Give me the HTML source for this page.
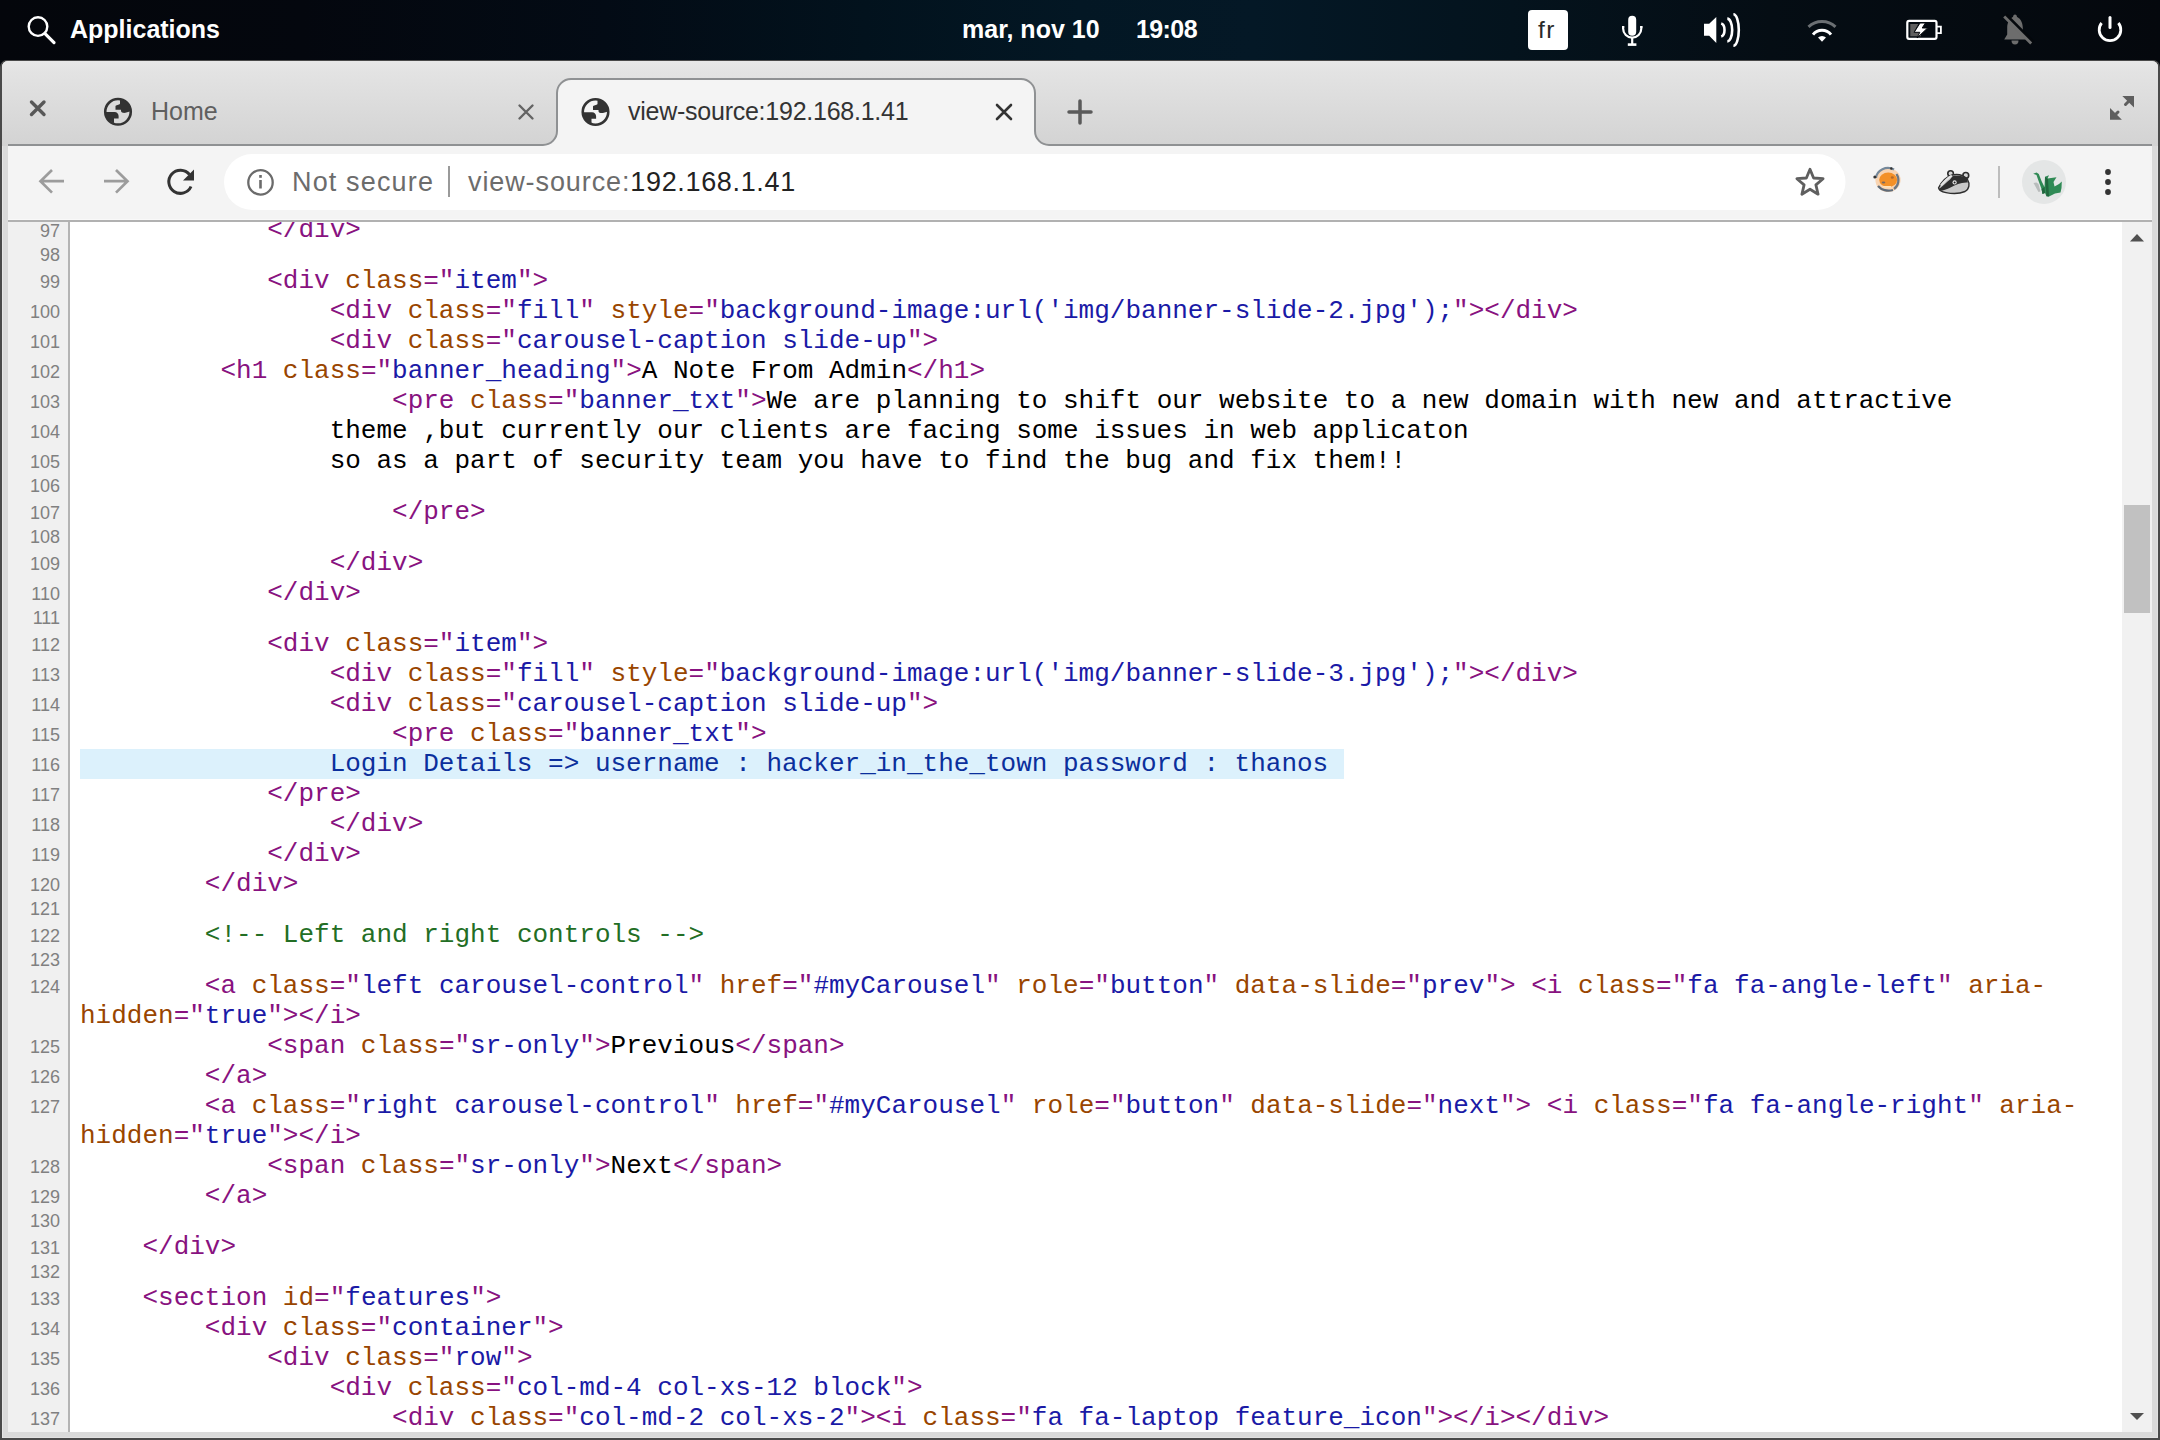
<!DOCTYPE html>
<html><head><meta charset="utf-8">
<style>
*{box-sizing:border-box}
html,body{margin:0;padding:0;width:2160px;height:1440px;overflow:hidden;background:#05080d;font-family:"Liberation Sans",sans-serif}
svg{position:absolute;overflow:visible}
#panel{position:absolute;left:0;top:0;width:2160px;height:60px;background:linear-gradient(90deg,#04060b 0%,#04070e 14%,#030b15 28%,#02121d 40%,#031724 50%,#041826 58%,#04131d 70%,#050d14 82%,#05080d 100%)}
.pt{position:absolute;color:#fff;font-weight:bold;font-size:25px;top:14px;line-height:30px;white-space:pre}
#win{position:absolute;left:0;top:60px;width:2160px;height:1380px;background:#4a4a4a;border-radius:7px 7px 0 0}
#frame{position:absolute;left:2px;top:1px;width:2156px;height:1377px;background:#dadada;border-radius:6px 6px 0 0;box-shadow:inset 1px 0 0 #e6e6e6,inset -1px -1px 0 #e2e2e2}
#tabstrip{position:absolute;left:2px;top:1px;width:2156px;height:85px;background:linear-gradient(#e8e8e8 0px,#e3e3e3 10px,#d3d3d3 85px);border-radius:6px 6px 0 0}
#toolbar{position:absolute;left:8px;top:86px;width:2144px;height:74px;background:#f4f4f4}
#tbline{position:absolute;left:8px;top:159px;width:2144px;height:3px;background:linear-gradient(#f9f9f9 0,#f9f9f9 1px,#b1b1b1 1px)}
#content{position:absolute;left:8px;top:162px;width:2144px;height:1210px;background:#fff;overflow:hidden}
#gutterbg{position:absolute;left:0;top:0;width:62px;height:1210px;background:#f0f0f0;border-right:2px solid #b4b4b4}
#code{position:absolute;left:0;top:-7px;border-collapse:collapse;border-spacing:0}
#code td{padding:0;vertical-align:baseline}
#code td.ln{width:62px;font-family:"Liberation Sans",sans-serif;font-size:18px;color:#808080;text-align:right;padding-right:10px;white-space:nowrap}
#code td.lc{font-family:"Liberation Mono",monospace;font-size:26px;color:#000;padding-left:10px;white-space:pre}
.t{color:#881280}.n{color:#994500}.v{color:#1a1aa6}.c{color:#236e25}
.hl{background:#dcf1fc;color:#0b2f9c}
.hl span{color:#0b2f9c}
#sbar{position:absolute;left:2114px;top:0;width:30px;height:1210px;background:#f1f1f1}
.ui{position:absolute;white-space:pre;font-family:"Liberation Sans",sans-serif}
</style></head><body>
<div id="panel">
  <svg width="60" height="60" style="left:0;top:0">
    <circle cx="38" cy="26.6" r="9.3" fill="none" stroke="#fff" stroke-width="2.4"/>
    <line x1="45" y1="33.6" x2="54" y2="42.6" stroke="#fff" stroke-width="3.2" stroke-linecap="round"/>
  </svg>
  <div class="pt" style="left:70px">Applications</div>
  <div class="pt" style="left:962px">mar, nov 10</div>
  <div class="pt" style="left:1136px;letter-spacing:-0.6px">19:08</div>
  <!-- fr -->
  <div style="position:absolute;left:1528px;top:10px;width:40px;height:40px;background:#fff;border-radius:4px"></div>
  <div class="ui" style="left:1538px;top:14.5px;font-size:24.5px;line-height:30px;color:#2a2a2a;letter-spacing:1.5px">fr</div>
  <!-- mic -->
  <svg width="40" height="60" style="left:1612px;top:0">
    <rect x="16.2" y="15.8" width="8" height="20" rx="4" fill="#fff"/>
    <path d="M11.1 26 V28.5 A9.1 9.1 0 0 0 29.3 28.5 V26" fill="none" stroke="#fff" stroke-width="2.2"/>
    <path d="M10 27 H12.2 M28.2 27 H30.4" stroke="#fff" stroke-width="2"/>
    <line x1="20.2" y1="37" x2="20.2" y2="44" stroke="#fff" stroke-width="2.2"/>
    <rect x="15.8" y="43.3" width="8.6" height="2.6" fill="#fff"/>
  </svg>
  <!-- volume -->
  <svg width="50" height="60" style="left:1700px;top:0">
    <path d="M4 23.7 H9.2 L16.3 17 V43 L9.2 35.7 H4 Z" fill="#fff"/>
    <path d="M21.2 23.5 A4 6.6 0 0 1 21.2 36.5" fill="none" stroke="#fff" stroke-width="2.6"/>
    <path d="M27.3 18.6 A4.8 11.2 0 0 1 27.3 41.4" fill="none" stroke="#fff" stroke-width="2.6"/>
    <path d="M33.4 14.2 A5.4 15.8 0 0 1 33.4 45.8" fill="none" stroke="#fff" stroke-width="2.6"/>
  </svg>
  <!-- wifi -->
  <svg width="50" height="60" style="left:1797px;top:0">
    <path d="M11.5 26.9 A19.5 19.5 0 0 1 38.5 26.9" fill="none" stroke="#6b6f73" stroke-width="3"/>
    <path d="M16 34.6 A11.5 11.5 0 0 1 34 34.6" fill="none" stroke="#fff" stroke-width="3"/>
    <path d="M21 37.6 L25 41.8 L29 37.6 A5.8 5.8 0 0 0 21 37.6 Z" fill="#fff"/>
  </svg>
  <!-- battery -->
  <svg width="50" height="60" style="left:1900px;top:0">
    <rect x="7.3" y="20.9" width="29.2" height="18" rx="1.8" fill="none" stroke="#fff" stroke-width="2.2"/>
    <path d="M36.5 26.6 H40.9 V33.2 H36.5" fill="none" stroke="#fff" stroke-width="1.8"/>
    <path d="M10.3 24 H18.3 L13.7 32.3 H21 V36.3 H10.3 Z" fill="#5f5f5f"/>
    <path d="M20 23 L14.2 32.3 H19.8 L17 38 L27.6 28 H22.2 L25.4 23 Z" fill="#fff" stroke="#05080c" stroke-width="1"/>
  </svg>
  <!-- bell muted -->
  <svg width="50" height="60" style="left:1992px;top:0">
    <path d="M23 16 C18 17.5 15.2 22 15.2 28 V34.5 L12.2 39.6 H33.6 L30.8 34.5 V28 C30.8 22 28 17.5 23 16 Z" fill="#6d6d6d"/>
    <circle cx="23" cy="16.2" r="1.8" fill="#6d6d6d"/>
    <path d="M19.5 40.5 H26.5 A3.5 4 0 0 1 19.5 40.5 Z" fill="#6d6d6d"/>
    <line x1="13.5" y1="15" x2="41" y2="42.5" stroke="#05080c" stroke-width="4"/>
    <line x1="12.2" y1="16.6" x2="39.2" y2="43.4" stroke="#6d6d6d" stroke-width="2.8"/>
  </svg>
  <!-- power -->
  <svg width="50" height="60" style="left:2085px;top:0">
    <path d="M16.6 23 A10.8 10.8 0 1 0 33.4 23" fill="none" stroke="#fff" stroke-width="2.8"/>
    <line x1="25" y1="17.5" x2="25" y2="27.5" stroke="#fff" stroke-width="3" stroke-linecap="round"/>
  </svg>
</div>
<div id="win">
  <div id="frame"></div>
  <div id="tabstrip"></div>
  <div id="toolbar"></div>
  <div id="tbline"></div>
  <div id="content">
    <div id="gutterbg"></div>
    <table id="code"><tbody>
<tr><td class="ln">97</td><td class="lc">            <span class="t">&lt;/div&gt;</span></td></tr>
<tr class="e"><td class="ln">98</td><td class="lc"></td></tr>
<tr><td class="ln">99</td><td class="lc">            <span class="t">&lt;div </span><span class="n">class</span><span class="t">="</span><span class="v">item</span><span class="t">"&gt;</span></td></tr>
<tr><td class="ln">100</td><td class="lc">                <span class="t">&lt;div </span><span class="n">class</span><span class="t">="</span><span class="v">fill</span><span class="t">" </span><span class="n">style</span><span class="t">="</span><span class="v">background-image:url('img/banner-slide-2.jpg');</span><span class="t">"&gt;&lt;/div&gt;</span></td></tr>
<tr><td class="ln">101</td><td class="lc">                <span class="t">&lt;div </span><span class="n">class</span><span class="t">="</span><span class="v">carousel-caption slide-up</span><span class="t">"&gt;</span></td></tr>
<tr><td class="ln">102</td><td class="lc">         <span class="t">&lt;h1 </span><span class="n">class</span><span class="t">="</span><span class="v">banner_heading</span><span class="t">"&gt;</span>A Note From Admin<span class="t">&lt;/h1&gt;</span></td></tr>
<tr><td class="ln">103</td><td class="lc">                    <span class="t">&lt;pre </span><span class="n">class</span><span class="t">="</span><span class="v">banner_txt</span><span class="t">"&gt;</span>We are planning to shift our website to a new domain with new and attractive</td></tr>
<tr><td class="ln">104</td><td class="lc">                theme ,but currently our clients are facing some issues in web applicaton</td></tr>
<tr><td class="ln">105</td><td class="lc">                so as a part of security team you have to find the bug and fix them!!</td></tr>
<tr class="e"><td class="ln">106</td><td class="lc"></td></tr>
<tr><td class="ln">107</td><td class="lc">                    <span class="t">&lt;/pre&gt;</span></td></tr>
<tr class="e"><td class="ln">108</td><td class="lc"></td></tr>
<tr><td class="ln">109</td><td class="lc">                <span class="t">&lt;/div&gt;</span></td></tr>
<tr><td class="ln">110</td><td class="lc">            <span class="t">&lt;/div&gt;</span></td></tr>
<tr class="e"><td class="ln">111</td><td class="lc"></td></tr>
<tr><td class="ln">112</td><td class="lc">            <span class="t">&lt;div </span><span class="n">class</span><span class="t">="</span><span class="v">item</span><span class="t">"&gt;</span></td></tr>
<tr><td class="ln">113</td><td class="lc">                <span class="t">&lt;div </span><span class="n">class</span><span class="t">="</span><span class="v">fill</span><span class="t">" </span><span class="n">style</span><span class="t">="</span><span class="v">background-image:url('img/banner-slide-3.jpg');</span><span class="t">"&gt;&lt;/div&gt;</span></td></tr>
<tr><td class="ln">114</td><td class="lc">                <span class="t">&lt;div </span><span class="n">class</span><span class="t">="</span><span class="v">carousel-caption slide-up</span><span class="t">"&gt;</span></td></tr>
<tr><td class="ln">115</td><td class="lc">                    <span class="t">&lt;pre </span><span class="n">class</span><span class="t">="</span><span class="v">banner_txt</span><span class="t">"&gt;</span></td></tr>
<tr><td class="ln">116</td><td class="lc"><span class="hl">                Login Details =&gt; username : hacker_in_the_town password : thanos </span></td></tr>
<tr><td class="ln">117</td><td class="lc">            <span class="t">&lt;/pre&gt;</span></td></tr>
<tr><td class="ln">118</td><td class="lc">                <span class="t">&lt;/div&gt;</span></td></tr>
<tr><td class="ln">119</td><td class="lc">            <span class="t">&lt;/div&gt;</span></td></tr>
<tr><td class="ln">120</td><td class="lc">        <span class="t">&lt;/div&gt;</span></td></tr>
<tr class="e"><td class="ln">121</td><td class="lc"></td></tr>
<tr><td class="ln">122</td><td class="lc">        <span class="c">&lt;!-- Left and right controls --&gt;</span></td></tr>
<tr class="e"><td class="ln">123</td><td class="lc"></td></tr>
<tr><td class="ln">124</td><td class="lc">        <span class="t">&lt;a </span><span class="n">class</span><span class="t">="</span><span class="v">left carousel-control</span><span class="t">" </span><span class="n">href</span><span class="t">="</span><span class="v">#myCarousel</span><span class="t">" </span><span class="n">role</span><span class="t">="</span><span class="v">button</span><span class="t">" </span><span class="n">data-slide</span><span class="t">="</span><span class="v">prev</span><span class="t">"&gt;</span> <span class="t">&lt;i </span><span class="n">class</span><span class="t">="</span><span class="v">fa fa-angle-left</span><span class="t">" </span><span class="n">aria-</span><br><span class="n">hidden</span><span class="t">="</span><span class="v">true</span><span class="t">"&gt;&lt;/i&gt;</span></td></tr>
<tr><td class="ln">125</td><td class="lc">            <span class="t">&lt;span </span><span class="n">class</span><span class="t">="</span><span class="v">sr-only</span><span class="t">"&gt;</span>Previous<span class="t">&lt;/span&gt;</span></td></tr>
<tr><td class="ln">126</td><td class="lc">        <span class="t">&lt;/a&gt;</span></td></tr>
<tr><td class="ln">127</td><td class="lc">        <span class="t">&lt;a </span><span class="n">class</span><span class="t">="</span><span class="v">right carousel-control</span><span class="t">" </span><span class="n">href</span><span class="t">="</span><span class="v">#myCarousel</span><span class="t">" </span><span class="n">role</span><span class="t">="</span><span class="v">button</span><span class="t">" </span><span class="n">data-slide</span><span class="t">="</span><span class="v">next</span><span class="t">"&gt;</span> <span class="t">&lt;i </span><span class="n">class</span><span class="t">="</span><span class="v">fa fa-angle-right</span><span class="t">" </span><span class="n">aria-</span><br><span class="n">hidden</span><span class="t">="</span><span class="v">true</span><span class="t">"&gt;&lt;/i&gt;</span></td></tr>
<tr><td class="ln">128</td><td class="lc">            <span class="t">&lt;span </span><span class="n">class</span><span class="t">="</span><span class="v">sr-only</span><span class="t">"&gt;</span>Next<span class="t">&lt;/span&gt;</span></td></tr>
<tr><td class="ln">129</td><td class="lc">        <span class="t">&lt;/a&gt;</span></td></tr>
<tr class="e"><td class="ln">130</td><td class="lc"></td></tr>
<tr><td class="ln">131</td><td class="lc">    <span class="t">&lt;/div&gt;</span></td></tr>
<tr class="e"><td class="ln">132</td><td class="lc"></td></tr>
<tr><td class="ln">133</td><td class="lc">    <span class="t">&lt;section </span><span class="n">id</span><span class="t">="</span><span class="v">features</span><span class="t">"&gt;</span></td></tr>
<tr><td class="ln">134</td><td class="lc">        <span class="t">&lt;div </span><span class="n">class</span><span class="t">="</span><span class="v">container</span><span class="t">"&gt;</span></td></tr>
<tr><td class="ln">135</td><td class="lc">            <span class="t">&lt;div </span><span class="n">class</span><span class="t">="</span><span class="v">row</span><span class="t">"&gt;</span></td></tr>
<tr><td class="ln">136</td><td class="lc">                <span class="t">&lt;div </span><span class="n">class</span><span class="t">="</span><span class="v">col-md-4 col-xs-12 block</span><span class="t">"&gt;</span></td></tr>
<tr><td class="ln">137</td><td class="lc">                    <span class="t">&lt;div </span><span class="n">class</span><span class="t">="</span><span class="v">col-md-2 col-xs-2</span><span class="t">"&gt;&lt;i </span><span class="n">class</span><span class="t">="</span><span class="v">fa fa-laptop feature_icon</span><span class="t">"&gt;&lt;/i&gt;&lt;/div&gt;</span></td></tr>
    </tbody></table>
    <div id="sbar"></div>
    <svg width="30" height="1210" style="left:2114px;top:0">
      <path d="M8 19.5 L15 12 L22 19.5 Z" fill="#505050"/>
      <rect x="2" y="283" width="26" height="108" fill="#c1c1c1"/>
      <path d="M8 1191 L15 1198 L22 1191 Z" fill="#505050"/>
    </svg>
  </div>
</div>
<!-- tab strip overlay (page coords) -->
<svg width="2160" height="160" style="left:0;top:0">
  <path d="M8 145 H543 A14 14 0 0 0 557 131 V93 A14 14 0 0 1 571 79 H1021 A14 14 0 0 1 1035 93 V131 A14 14 0 0 0 1049 145 H2152 V147 H8 Z" fill="#f4f4f4"/>
  <path d="M8 145 H543 A14 14 0 0 0 557 131 V93 A14 14 0 0 1 571 79 H1021 A14 14 0 0 1 1035 93 V131 A14 14 0 0 0 1049 145 H2152" fill="none" stroke="#8f9193" stroke-width="2"/>
  <!-- window close -->
  <path d="M31.5 102 L44 114.5 M44 102 L31.5 114.5" stroke="#585858" stroke-width="3.4" stroke-linecap="round"/>
  <!-- home globe -->
  <g transform="translate(100,93)">
    <circle cx="18" cy="18.8" r="12.75" fill="none" stroke="#333" stroke-width="2.6"/>
    <path d="M20 6.2 V10.5 C20 11.8 17 11.5 15.5 13 V16.8 H21 V18 C21 19.5 23.5 20.2 25.5 19.8 L30.6 18.2 A12.6 12.6 0 0 0 20 6.2 Z" fill="#333"/>
    <path d="M5.4 19 H14.5 C17 19 18.6 21 18.6 23 V25.5 H14 V30.2 A12.6 12.6 0 0 1 5.4 19 Z" fill="#333"/>
  </g>
  <path d="M519.5 105.5 L532.5 118.5 M532.5 105.5 L519.5 118.5" stroke="#646464" stroke-width="2.4" stroke-linecap="round"/>
  <!-- active globe -->
  <g transform="translate(577.5,93.2)">
    <circle cx="18" cy="18.8" r="12.75" fill="none" stroke="#333" stroke-width="2.6"/>
    <path d="M20 6.2 V10.5 C20 11.8 17 11.5 15.5 13 V16.8 H21 V18 C21 19.5 23.5 20.2 25.5 19.8 L30.6 18.2 A12.6 12.6 0 0 0 20 6.2 Z" fill="#333"/>
    <path d="M5.4 19 H14.5 C17 19 18.6 21 18.6 23 V25.5 H14 V30.2 A12.6 12.6 0 0 1 5.4 19 Z" fill="#333"/>
  </g>
  <path d="M997 105 L1011 119 M1011 105 L997 119" stroke="#333" stroke-width="2.6" stroke-linecap="round"/>
  <!-- new tab + -->
  <path d="M1080 101 V123 M1069 112 H1091" stroke="#5a5a5a" stroke-width="3.5" stroke-linecap="round"/>
  <!-- expand -->
  <path d="M2122.3 96 H2134 V107.5 Z M2110 108 V119.8 H2121.9 Z" fill="#5e5e5e"/>
  <path d="M2125.5 104.5 L2128.5 101.5 M2112.5 117.5 L2118 112" stroke="#5e5e5e" stroke-width="3" stroke-linecap="round"/>
  <!-- toolbar: back/fwd -->
  <path d="M40.5 181.2 H64 M52 170 L40.5 181.2 L52 192.6" fill="none" stroke="#9c9c9c" stroke-width="2.7"/>
  <path d="M104 181.2 H127.5 M116 170 L127.5 181.2 L116 192.6" fill="none" stroke="#9c9c9c" stroke-width="2.7"/>
  <!-- reload -->
  <path d="M191 186.5 A11.6 11.6 0 1 1 189.5 174.5" fill="none" stroke="#333" stroke-width="3"/>
  <path d="M194 169.5 V180.5 H183 Z" fill="#333"/>
  <!-- omnibox -->
  <rect x="224" y="154" width="1621.5" height="56" rx="28" fill="#fff"/>
  <circle cx="260.5" cy="182.4" r="12.2" fill="none" stroke="#6b6b6b" stroke-width="2.3"/>
  <rect x="259.2" y="180" width="2.6" height="8.5" fill="#6b6b6b"/>
  <rect x="259.2" y="175" width="2.6" height="2.8" fill="#6b6b6b"/>
  <rect x="448" y="166" width="2" height="31" fill="#9a9a9a"/>
  <!-- star -->
  <path d="M1810.0 169.2 L1813.6 178.0 L1823.1 178.7 L1815.9 184.9 L1818.1 194.2 L1810.0 189.2 L1801.9 194.2 L1804.1 184.9 L1796.9 178.7 L1806.4 178.0 Z" fill="none" stroke="#5f5f5f" stroke-width="2.8" stroke-linejoin="round"/>
  <!-- ext 1: orange -->
  <g>
    <ellipse cx="1888" cy="180" rx="12.6" ry="12" fill="#f9c99c" opacity="0.75"/>
    <path d="M1876 178 A12 11 0 0 1 1894 169.5" fill="none" stroke="#75889a" stroke-width="2.2"/>
    <path d="M1896.5 174 A11 11 0 0 1 1894 189" fill="none" stroke="#6c7784" stroke-width="2.2"/>
    <path d="M1878 186 A13 11 0 0 0 1893 190" fill="none" stroke="#5f6b78" stroke-width="2.2"/>
    <ellipse cx="1888.2" cy="179.8" rx="9" ry="7.3" fill="#f39027"/>
    <ellipse cx="1883.5" cy="182.5" rx="1.8" ry="1" fill="#7a6a60"/>
    <ellipse cx="1892.3" cy="177.5" rx="1.5" ry="1.2" fill="#b46a2a"/>
    <rect x="1883" y="186" width="8" height="1.6" fill="#ffe2b8"/>
    <circle cx="1874.8" cy="177" r="1.5" fill="#333"/>
    <circle cx="1891.3" cy="168.5" r="1.2" fill="#333"/>
  </g>
  <!-- ext 2: badger -->
  <g>
    <circle cx="1950.6" cy="173.6" r="2.8" fill="#d6d6d6" stroke="#2e2e2e" stroke-width="1.6"/>
    <circle cx="1965.8" cy="175.4" r="2.9" fill="#d6d6d6" stroke="#2e2e2e" stroke-width="1.6"/>
    <path d="M1938.6 187.8 C1941 183 1946 177 1952 175 C1958 173.8 1964 175.5 1967.5 179.5 C1970 183.5 1969.5 189 1965 191.5 C1960 193.6 1952 193.8 1946 192.6 C1942 191.8 1939 190.5 1938.6 187.8 Z" fill="#c9c9c9" stroke="#2e2e2e" stroke-width="1.4"/>
    <path d="M1939 189 C1943 185.5 1947 182 1950 179.5 L1952.5 176.2 C1957 175.2 1962 175.8 1966.8 177.6 L1967.8 182.6 C1961 182.2 1956 184.6 1951 187.2 C1946 189.6 1942 191 1939.5 190.6 Z" fill="#2f2f2f"/>
    <path d="M1940.8 185.5 C1944 181.5 1947.5 178 1951.8 175.6" fill="none" stroke="#e6e6e6" stroke-width="1.8"/>
    <circle cx="1954.6" cy="182.4" r="2.1" fill="#e8e8e8"/>
    <circle cx="1954.6" cy="182.4" r="1" fill="#222"/>
  </g>
  <rect x="1998" y="166" width="2" height="32" fill="#bdbdbd"/>
  <!-- avatar -->
  <circle cx="2044" cy="182" r="22" fill="#e4e6e6"/>
  <g transform="translate(2024,162)">
    <path d="M9.5 21 L12.5 20.5 L14.5 22 L16.5 29.5 L14.5 30 Z" fill="#b8bcbc"/>
    <path d="M9.2 11.8 L12.5 10.6 L14.8 12 L17.5 19 L20.5 25 L21 14.8 L25 13.2 L23.5 16.5 L32.5 15.3 L29.5 20 L30.5 24.5 L35 22 L37.8 19.4 L37.5 26 L36.5 30.5 L31 31.5 L25 34.5 L22.5 34.3 L21 31 L18.5 32 L17.5 27 L13.5 16 L12.5 13 Z" fill="#2f8a55"/>
    <path d="M21 14.8 L22.5 34.3 L25 34.5 L24 17 Z M17.5 27 L18.5 32 L21 31 L20.5 25 Z" fill="#21663e"/>
  </g>
  <circle cx="2108" cy="172" r="2.9" fill="#333"/>
  <circle cx="2108" cy="182" r="2.9" fill="#333"/>
  <circle cx="2108" cy="192" r="2.9" fill="#333"/>
</svg>
<div class="ui" style="left:151px;top:96px;font-size:25px;line-height:30px;color:#5f5f5f">Home</div>
<div class="ui" style="left:628px;top:96px;font-size:25px;line-height:30px;color:#333;letter-spacing:-0.25px">view-source:192.168.1.41</div>
<div class="ui" style="left:292px;top:167px;font-size:27px;line-height:30px;color:#6c6c6c;letter-spacing:1.15px">Not secure</div>
<div class="ui" style="left:468px;top:167px;font-size:27px;line-height:30px;color:#6c6c6c;letter-spacing:0.9px">view-source:<span style="color:#222;letter-spacing:0.65px">192.168.1.41</span></div>
</body></html>
